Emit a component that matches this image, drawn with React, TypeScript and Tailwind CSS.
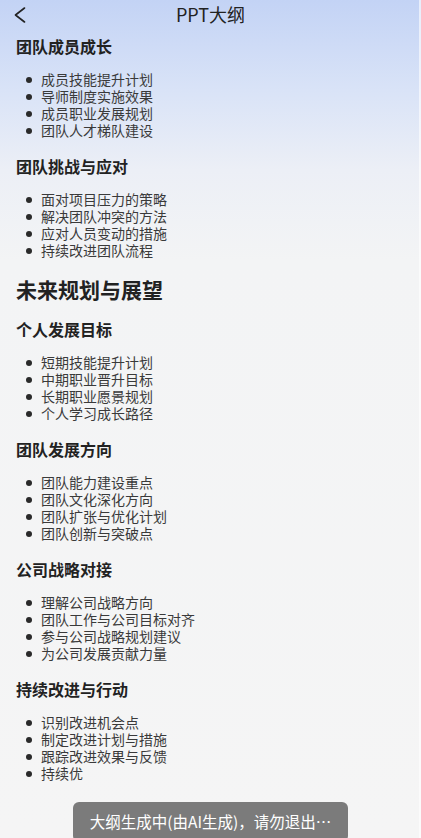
const sections = [
  {
    title: '团队成员成长',
    items: ['成员技能提升计划', '导师制度实施效果', '成员职业发展规划', '团队人才梯队建设'],
  },
  {
    title: '团队挑战与应对',
    items: ['面对项目压力的策略', '解决团队冲突的方法', '应对人员变动的措施', '持续改进团队流程'],
  },
];

const future = [
  {
    title: '个人发展目标',
    items: ['短期技能提升计划', '中期职业晋升目标', '长期职业愿景规划', '个人学习成长路径'],
  },
  {
    title: '团队发展方向',
    items: ['团队能力建设重点', '团队文化深化方向', '团队扩张与优化计划', '团队创新与突破点'],
  },
  {
    title: '公司战略对接',
    items: ['理解公司战略方向', '团队工作与公司目标对齐', '参与公司战略规划建议', '为公司发展贡献力量'],
  },
  {
    title: '持续改进与行动',
    items: ['识别改进机会点', '制定改进计划与措施', '跟踪改进效果与反馈', '持续优'],
  },
];

const Section = ({ title, items }: { title: string; items: string[] }) => (
  <div className="mb-[15px]">
    <h3 className="text-[16px] leading-[24px] font-bold text-[#222]">{title}</h3>
    <ul className="mt-[13px] pl-[10px]">
      {items.map((item) => (
        <li key={item} className="flex items-center text-[14px] leading-[17px] text-[#3a3a3a]">
          <span className="w-[6px] h-[6px] rounded-full bg-[#2a2a2a] mr-[9px] shrink-0" />
          {item}
        </li>
      ))}
    </ul>
  </div>
);

export default function App() {
  return (
    <div
      className="relative min-h-screen w-full bg-[linear-gradient(180deg,#c3d3f5_0px,#d9e3f7_90px,#eceff6_170px,#f3f4f5_260px,#f5f5f5_100%)] overflow-hidden"
      style={{ fontFamily: '"Noto Sans CJK SC", "Noto Sans", sans-serif' }}
    >
      <div className="absolute top-0 right-0 w-[2px] h-full bg-white/60" />
      {/* Header */}
      <div className="relative h-[28px] flex items-center justify-center">
        <svg className="absolute left-[14px] top-[7px]" width="12" height="16" viewBox="0 0 12 16" fill="none">
          <polyline points="10.5,1 1.5,8 10.5,15" stroke="#222" strokeWidth="1.6" strokeLinecap="round" strokeLinejoin="round" />
        </svg>
        <span className="text-[18px] text-[#222]">PPT大纲</span>
      </div>

      <div className="px-4 pt-[6px]">
        {sections.map((s) => (
          <Section key={s.title} {...s} />
        ))}
        <h2 className="text-[21px] leading-[30px] font-bold text-[#222] mb-[13px]">未来规划与展望</h2>
        {future.map((s) => (
          <Section key={s.title} {...s} />
        ))}
      </div>

      {/* Toast */}
      <div className="fixed left-[73px] bottom-[-4px] w-[275px] h-[40px] rounded-[6px] bg-[#7b7b7b] flex items-start justify-center pt-[8px]">
        <span className="text-[15.5px] text-white leading-[22px]">大纲生成中(由AI生成)，请勿退出…</span>
      </div>
    </div>
  );
}
